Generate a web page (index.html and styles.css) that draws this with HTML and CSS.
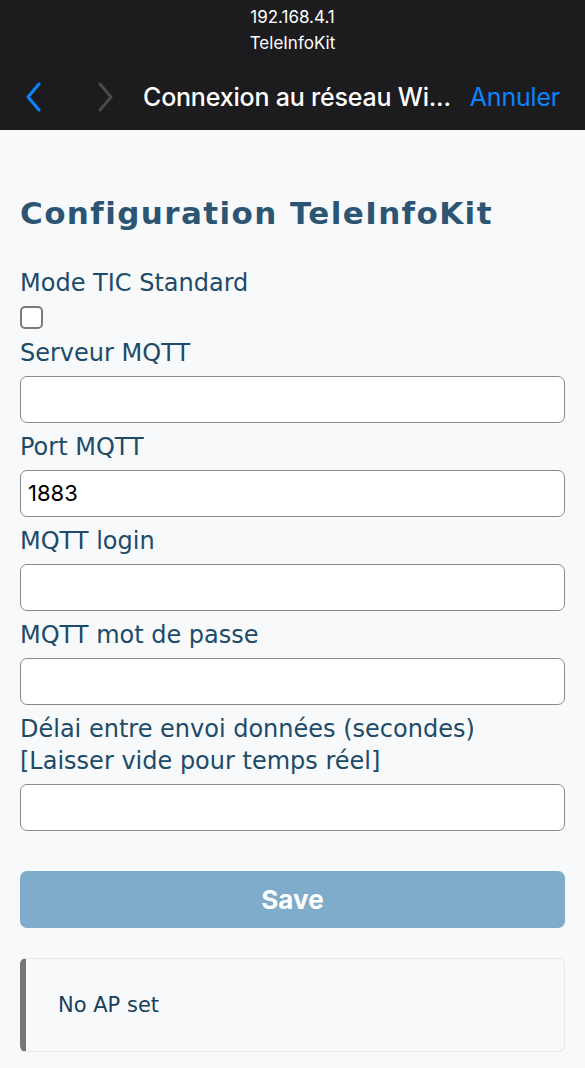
FILE: index.html
```html
<!DOCTYPE html>
<html lang="fr">
<head>
<meta charset="utf-8">
<title>TeleInfoKit</title>
<link rel="stylesheet" href="styles.css">
</head>
<body>
<header class="topbar">
  <div class="addr">
    <div class="addr-line">192.168.4.1</div>
    <div class="addr-line">TeleInfoKit</div>
  </div>
  <nav class="nav">
    <span class="chev chev-back">
      <svg width="20" height="30" viewBox="0 0 20 30"><path d="M15 2 L4 15 L15 28" fill="none" stroke="#0a84ff" stroke-width="3" stroke-linecap="round" stroke-linejoin="round"/></svg>
    </span>
    <span class="chev chev-fwd">
      <svg width="20" height="30" viewBox="0 0 20 30"><path d="M5 2 L16 15 L5 28" fill="none" stroke="#4a4a4c" stroke-width="3" stroke-linecap="round" stroke-linejoin="round"/></svg>
    </span>
    <span class="nav-title">Connexion au réseau Wi...</span>
    <span class="nav-cancel">Annuler</span>
  </nav>
</header>
<main class="page">
  <h1 class="title">Configuration TeleInfoKit</h1>
  <form class="form">
    <label class="lbl">Mode TIC Standard</label>
    <span class="check"></span>
    <label class="lbl">Serveur MQTT</label>
    <div class="field"></div>
    <label class="lbl">Port MQTT</label>
    <div class="field">1883</div>
    <label class="lbl">MQTT login</label>
    <div class="field"></div>
    <label class="lbl">MQTT mot de passe</label>
    <div class="field"></div>
    <label class="lbl">Délai entre envoi données (secondes)<br>[Laisser vide pour temps réel]</label>
    <div class="field"></div>
    <div class="save">Save</div>
  </form>
  <div class="msg">No AP set</div>
</main>
</body>
</html>
```
FILE: styles.css
```css
html, body {
  margin: 0;
  padding: 0;
}
body {
  background: #f8f9fb;
  width: 585px;
  height: 1068px;
  overflow: hidden;
}
.topbar {
  background: #1c1c1e;
  height: 130px;
  box-sizing: border-box;
  padding-top: 4px;
  font-family: Inter, Roboto, "Liberation Sans", sans-serif;
}
.addr {
  text-align: center;
  color: #ffffff;
  font-size: 17px;
  line-height: 26px;
}
.nav {
  display: flex;
  align-items: center;
  height: 44px;
  margin-top: 19px;
  padding-left: 24px;
}
.chev {
  display: flex;
  align-items: center;
}
.chev-fwd {
  margin-left: 51px;
}
.nav-title {
  margin-left: 28px;
  color: #ffffff;
  font-size: 25px;
  font-weight: 500;
  letter-spacing: -0.2px;
}
.nav-cancel {
  margin-left: auto;
  margin-right: 25px;
  color: #0a84ff;
  font-size: 25px;
  letter-spacing: -0.2px;
}
.page {
  padding: 63px 20px 0 20px;
  font-family: "DejaVu Sans", Verdana, sans-serif;
}
.title {
  margin: 0;
  font-size: 31px;
  line-height: 40px;
  font-weight: bold;
  letter-spacing: 1.4px;
  color: #2c5573;
}
.form {
  margin-top: 34px;
}
.lbl {
  display: block;
  margin-top: 8px;
  margin-bottom: 7px;
  font-size: 24px;
  line-height: 32px;
  color: #204b68;
}
.form > .lbl:first-child {
  margin-top: 0;
}
.check {
  display: block;
  width: 19px;
  height: 19px;
  border: 2px solid #7a7a7a;
  border-radius: 5px;
  background: #ffffff;
}
.field {
  box-sizing: border-box;
  height: 47px;
  border: 1.5px solid #8a8a8a;
  border-radius: 7px;
  background: #ffffff;
  padding: 0 7px;
  font-family: Inter, Roboto, "Liberation Sans", sans-serif;
  font-size: 22px;
  line-height: 44px;
  color: #000000;
}
.save {
  margin-top: 40px;
  height: 57px;
  border-radius: 7px;
  background: #7facca;
  color: #ffffff;
  font-family: Inter, Roboto, "Liberation Sans", sans-serif;
  font-weight: 700;
  font-size: 26px;
  line-height: 57px;
  text-align: center;
}
.msg {
  margin-top: 30px;
  box-sizing: border-box;
  height: 94px;
  border: 1px solid #e6e8ea;
  border-left: 6px solid #777777;
  border-radius: 6px;
  padding-left: 32px;
  font-size: 21px;
  line-height: 92px;
  color: #173f5c;
}
```
